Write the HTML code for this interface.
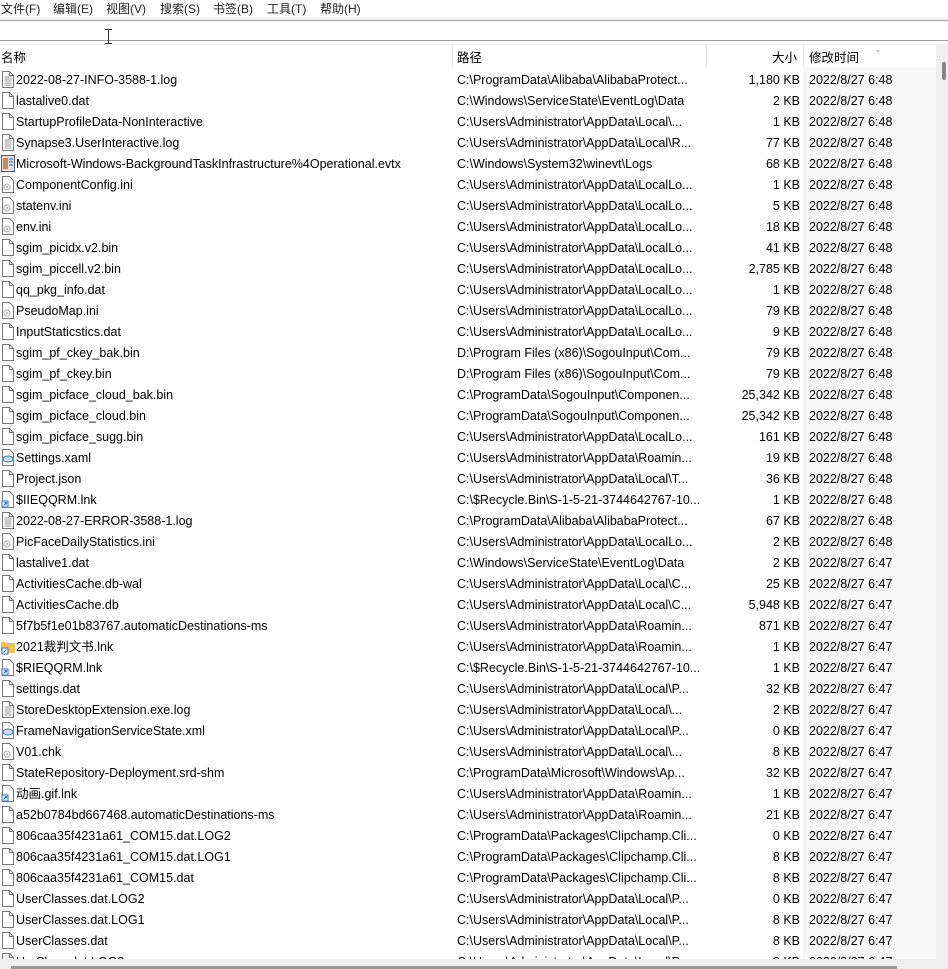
<!DOCTYPE html>
<html><head><meta charset="utf-8"><style>
*{margin:0;padding:0;box-sizing:border-box}
body{width:948px;height:969px;overflow:hidden;background:#fff;font-family:"Liberation Sans","Noto Sans CJK SC",sans-serif;font-size:12.5px;color:#000;position:relative}
.menu{position:absolute;top:0;left:0;height:17px;width:948px;background:#fff;color:#222;font-size:12px}
.menu span{position:absolute;top:2px;line-height:15px}
.line{position:absolute;left:0;width:948px;height:1px}
.hdr{position:absolute;top:45px;height:22px;width:948px}
.hdr span{position:absolute;top:6px;line-height:15px}
.sep{position:absolute;top:45px;width:1px;height:22px;background:#e5e5e5}
.datebg{position:absolute;left:803px;top:67px;width:133px;height:892px;background:#f7f7f7}
.r{position:absolute;left:0;height:21px;width:936px;white-space:nowrap}
.r svg{position:absolute;left:1px;top:2px}
.r span{line-height:15px}
.n{position:absolute;left:16px;top:4px}
.p{position:absolute;left:457px;top:4px}
.s{position:absolute;right:136px;top:4px}
.d{position:absolute;left:809px;top:4px}
</style></head><body>
<div class="menu"><span style="left:1px">文件(F)</span><span style="left:53px">编辑(E)</span><span style="left:106px">视图(V)</span><span style="left:160px">搜索(S)</span><span style="left:213px">书签(B)</span><span style="left:267px">工具(T)</span><span style="left:320px">帮助(H)</span></div>
<div class="line" style="top:17px;background:#f2f2f2;height:3px"></div>
<div class="line" style="top:20px;background:#a0a0a0"></div>
<div class="line" style="top:40px;background:#a0a0a0"></div>
<div style="position:absolute;left:108px;top:29px;width:1px;height:14px;background:#333"></div>
<div style="position:absolute;left:105px;top:29px;width:7px;height:1px;background:#333"></div>
<div style="position:absolute;left:105px;top:43px;width:7px;height:1px;background:#333"></div>
<div class="line" style="top:44px;background:#f0f0f0"></div>
<div class="hdr"><span style="left:1px">名称</span><span style="left:457px">路径</span><span style="left:772px">大小</span><span style="left:809px">修改时间</span><span style="left:874px;top:-3px;font-size:9px;color:#999">&#8964;</span></div>
<div class="sep" style="left:452px"></div><div class="sep" style="left:706px"></div><div class="sep" style="left:803px"></div>
<div class="datebg"></div>
<div style="position:absolute;left:936px;top:45px;width:12px;height:914px;background:#efefef"></div>
<div style="position:absolute;left:942px;top:62px;width:4px;height:18px;background:#888;border-radius:2px"></div>
<div style="position:absolute;left:0;top:959px;width:948px;height:10px;background:#efefef"></div>
<div style="position:absolute;left:11px;top:966px;width:886px;height:3px;background:#999"></div>
<svg width="0" height="0" style="position:absolute"><defs>
<symbol id="f" viewBox="0 0 14 17"><path d="M1.5 .5h7l4 4v12h-11z" fill="#fff" stroke="#777"/><path d="M8.5 .5v4h4" fill="none" stroke="#777"/></symbol>
<symbol id="t" viewBox="0 0 14 17"><path d="M1.5 .5h7l4 4v12h-11z" fill="#fff" stroke="#777"/><path d="M8.5 .5v4h4" fill="none" stroke="#777"/><path d="M3.5 6h7M3.5 8h7M3.5 10h7M3.5 12h7M3.5 14h7" stroke="#999"/></symbol>
<symbol id="i" viewBox="0 0 14 17"><path d="M1.5 .5h7l4 4v12h-11z" fill="#fff" stroke="#777"/><circle cx="6" cy="11" r="3" fill="none" stroke="#aaa"/><circle cx="6" cy="11" r="1" fill="#aaa"/></symbol>
<symbol id="l" viewBox="0 0 14 17"><path d="M1.5 .5h7l4 4v12h-11z" fill="#fff" stroke="#777"/><rect x="1" y="10" width="6" height="6" fill="#fff" stroke="#2b6cc4"/><path d="M2.5 14.5l3-3M3.5 11.5h2v2" stroke="#2b6cc4" fill="none"/></symbol>
<symbol id="e" viewBox="0 0 14 17"><rect x=".5" y=".5" width="13" height="16" fill="#dde" stroke="#557"/><rect x="2" y="3" width="5" height="11" fill="#c84"/><path d="M8 4h4M8 7h4M8 10h4" stroke="#36a"/></symbol>
<symbol id="x" viewBox="0 0 14 17"><path d="M1.5 .5h7l4 4v12h-11z" fill="#fff" stroke="#777"/><ellipse cx="7" cy="10" rx="5" ry="3" fill="#cde" stroke="#2a7ad0"/></symbol>
<symbol id="d" viewBox="0 0 14 17"><path d="M0 4h5l1 1h8v10H0z" fill="#f4c04e"/><rect x="1" y="10" width="6" height="6" fill="#fff" stroke="#2b6cc4"/><path d="M2.5 14.5l3-3" stroke="#2b6cc4"/></symbol>
</defs></svg>
<div id="rows">
<div class="r" style="top:69px"><svg width="14" height="17"><use href="#t"/></svg><span class="n">2022-08-27-INFO-3588-1.log</span><span class="p">C:\ProgramData\Alibaba\AlibabaProtect...</span><span class="s">1,180 KB</span><span class="d">2022/8/27 6:48</span></div>
<div class="r" style="top:90px"><svg width="14" height="17"><use href="#f"/></svg><span class="n">lastalive0.dat</span><span class="p">C:\Windows\ServiceState\EventLog\Data</span><span class="s">2 KB</span><span class="d">2022/8/27 6:48</span></div>
<div class="r" style="top:111px"><svg width="14" height="17"><use href="#f"/></svg><span class="n">StartupProfileData-NonInteractive</span><span class="p">C:\Users\Administrator\AppData\Local\...</span><span class="s">1 KB</span><span class="d">2022/8/27 6:48</span></div>
<div class="r" style="top:132px"><svg width="14" height="17"><use href="#t"/></svg><span class="n">Synapse3.UserInteractive.log</span><span class="p">C:\Users\Administrator\AppData\Local\R...</span><span class="s">77 KB</span><span class="d">2022/8/27 6:48</span></div>
<div class="r" style="top:153px"><svg width="14" height="17"><use href="#e"/></svg><span class="n">Microsoft-Windows-BackgroundTaskInfrastructure%4Operational.evtx</span><span class="p">C:\Windows\System32\winevt\Logs</span><span class="s">68 KB</span><span class="d">2022/8/27 6:48</span></div>
<div class="r" style="top:174px"><svg width="14" height="17"><use href="#i"/></svg><span class="n">ComponentConfig.ini</span><span class="p">C:\Users\Administrator\AppData\LocalLo...</span><span class="s">1 KB</span><span class="d">2022/8/27 6:48</span></div>
<div class="r" style="top:195px"><svg width="14" height="17"><use href="#i"/></svg><span class="n">statenv.ini</span><span class="p">C:\Users\Administrator\AppData\LocalLo...</span><span class="s">5 KB</span><span class="d">2022/8/27 6:48</span></div>
<div class="r" style="top:216px"><svg width="14" height="17"><use href="#i"/></svg><span class="n">env.ini</span><span class="p">C:\Users\Administrator\AppData\LocalLo...</span><span class="s">18 KB</span><span class="d">2022/8/27 6:48</span></div>
<div class="r" style="top:237px"><svg width="14" height="17"><use href="#f"/></svg><span class="n">sgim_picidx.v2.bin</span><span class="p">C:\Users\Administrator\AppData\LocalLo...</span><span class="s">41 KB</span><span class="d">2022/8/27 6:48</span></div>
<div class="r" style="top:258px"><svg width="14" height="17"><use href="#f"/></svg><span class="n">sgim_piccell.v2.bin</span><span class="p">C:\Users\Administrator\AppData\LocalLo...</span><span class="s">2,785 KB</span><span class="d">2022/8/27 6:48</span></div>
<div class="r" style="top:279px"><svg width="14" height="17"><use href="#f"/></svg><span class="n">qq_pkg_info.dat</span><span class="p">C:\Users\Administrator\AppData\LocalLo...</span><span class="s">1 KB</span><span class="d">2022/8/27 6:48</span></div>
<div class="r" style="top:300px"><svg width="14" height="17"><use href="#i"/></svg><span class="n">PseudoMap.ini</span><span class="p">C:\Users\Administrator\AppData\LocalLo...</span><span class="s">79 KB</span><span class="d">2022/8/27 6:48</span></div>
<div class="r" style="top:321px"><svg width="14" height="17"><use href="#f"/></svg><span class="n">InputStaticstics.dat</span><span class="p">C:\Users\Administrator\AppData\LocalLo...</span><span class="s">9 KB</span><span class="d">2022/8/27 6:48</span></div>
<div class="r" style="top:342px"><svg width="14" height="17"><use href="#f"/></svg><span class="n">sgim_pf_ckey_bak.bin</span><span class="p">D:\Program Files (x86)\SogouInput\Com...</span><span class="s">79 KB</span><span class="d">2022/8/27 6:48</span></div>
<div class="r" style="top:363px"><svg width="14" height="17"><use href="#f"/></svg><span class="n">sgim_pf_ckey.bin</span><span class="p">D:\Program Files (x86)\SogouInput\Com...</span><span class="s">79 KB</span><span class="d">2022/8/27 6:48</span></div>
<div class="r" style="top:384px"><svg width="14" height="17"><use href="#f"/></svg><span class="n">sgim_picface_cloud_bak.bin</span><span class="p">C:\ProgramData\SogouInput\Componen...</span><span class="s">25,342 KB</span><span class="d">2022/8/27 6:48</span></div>
<div class="r" style="top:405px"><svg width="14" height="17"><use href="#f"/></svg><span class="n">sgim_picface_cloud.bin</span><span class="p">C:\ProgramData\SogouInput\Componen...</span><span class="s">25,342 KB</span><span class="d">2022/8/27 6:48</span></div>
<div class="r" style="top:426px"><svg width="14" height="17"><use href="#f"/></svg><span class="n">sgim_picface_sugg.bin</span><span class="p">C:\Users\Administrator\AppData\LocalLo...</span><span class="s">161 KB</span><span class="d">2022/8/27 6:48</span></div>
<div class="r" style="top:447px"><svg width="14" height="17"><use href="#x"/></svg><span class="n">Settings.xaml</span><span class="p">C:\Users\Administrator\AppData\Roamin...</span><span class="s">19 KB</span><span class="d">2022/8/27 6:48</span></div>
<div class="r" style="top:468px"><svg width="14" height="17"><use href="#f"/></svg><span class="n">Project.json</span><span class="p">C:\Users\Administrator\AppData\Local\T...</span><span class="s">36 KB</span><span class="d">2022/8/27 6:48</span></div>
<div class="r" style="top:489px"><svg width="14" height="17"><use href="#l"/></svg><span class="n">$IIEQQRM.lnk</span><span class="p">C:\$Recycle.Bin\S-1-5-21-3744642767-10...</span><span class="s">1 KB</span><span class="d">2022/8/27 6:48</span></div>
<div class="r" style="top:510px"><svg width="14" height="17"><use href="#t"/></svg><span class="n">2022-08-27-ERROR-3588-1.log</span><span class="p">C:\ProgramData\Alibaba\AlibabaProtect...</span><span class="s">67 KB</span><span class="d">2022/8/27 6:48</span></div>
<div class="r" style="top:531px"><svg width="14" height="17"><use href="#i"/></svg><span class="n">PicFaceDailyStatistics.ini</span><span class="p">C:\Users\Administrator\AppData\LocalLo...</span><span class="s">2 KB</span><span class="d">2022/8/27 6:48</span></div>
<div class="r" style="top:552px"><svg width="14" height="17"><use href="#f"/></svg><span class="n">lastalive1.dat</span><span class="p">C:\Windows\ServiceState\EventLog\Data</span><span class="s">2 KB</span><span class="d">2022/8/27 6:47</span></div>
<div class="r" style="top:573px"><svg width="14" height="17"><use href="#f"/></svg><span class="n">ActivitiesCache.db-wal</span><span class="p">C:\Users\Administrator\AppData\Local\C...</span><span class="s">25 KB</span><span class="d">2022/8/27 6:47</span></div>
<div class="r" style="top:594px"><svg width="14" height="17"><use href="#f"/></svg><span class="n">ActivitiesCache.db</span><span class="p">C:\Users\Administrator\AppData\Local\C...</span><span class="s">5,948 KB</span><span class="d">2022/8/27 6:47</span></div>
<div class="r" style="top:615px"><svg width="14" height="17"><use href="#f"/></svg><span class="n">5f7b5f1e01b83767.automaticDestinations-ms</span><span class="p">C:\Users\Administrator\AppData\Roamin...</span><span class="s">871 KB</span><span class="d">2022/8/27 6:47</span></div>
<div class="r" style="top:636px"><svg width="14" height="17"><use href="#d"/></svg><span class="n">2021裁判文书.lnk</span><span class="p">C:\Users\Administrator\AppData\Roamin...</span><span class="s">1 KB</span><span class="d">2022/8/27 6:47</span></div>
<div class="r" style="top:657px"><svg width="14" height="17"><use href="#l"/></svg><span class="n">$RIEQQRM.lnk</span><span class="p">C:\$Recycle.Bin\S-1-5-21-3744642767-10...</span><span class="s">1 KB</span><span class="d">2022/8/27 6:47</span></div>
<div class="r" style="top:678px"><svg width="14" height="17"><use href="#f"/></svg><span class="n">settings.dat</span><span class="p">C:\Users\Administrator\AppData\Local\P...</span><span class="s">32 KB</span><span class="d">2022/8/27 6:47</span></div>
<div class="r" style="top:699px"><svg width="14" height="17"><use href="#t"/></svg><span class="n">StoreDesktopExtension.exe.log</span><span class="p">C:\Users\Administrator\AppData\Local\...</span><span class="s">2 KB</span><span class="d">2022/8/27 6:47</span></div>
<div class="r" style="top:720px"><svg width="14" height="17"><use href="#x"/></svg><span class="n">FrameNavigationServiceState.xml</span><span class="p">C:\Users\Administrator\AppData\Local\P...</span><span class="s">0 KB</span><span class="d">2022/8/27 6:47</span></div>
<div class="r" style="top:741px"><svg width="14" height="17"><use href="#i"/></svg><span class="n">V01.chk</span><span class="p">C:\Users\Administrator\AppData\Local\...</span><span class="s">8 KB</span><span class="d">2022/8/27 6:47</span></div>
<div class="r" style="top:762px"><svg width="14" height="17"><use href="#f"/></svg><span class="n">StateRepository-Deployment.srd-shm</span><span class="p">C:\ProgramData\Microsoft\Windows\Ap...</span><span class="s">32 KB</span><span class="d">2022/8/27 6:47</span></div>
<div class="r" style="top:783px"><svg width="14" height="17"><use href="#l"/></svg><span class="n">动画.gif.lnk</span><span class="p">C:\Users\Administrator\AppData\Roamin...</span><span class="s">1 KB</span><span class="d">2022/8/27 6:47</span></div>
<div class="r" style="top:804px"><svg width="14" height="17"><use href="#f"/></svg><span class="n">a52b0784bd667468.automaticDestinations-ms</span><span class="p">C:\Users\Administrator\AppData\Roamin...</span><span class="s">21 KB</span><span class="d">2022/8/27 6:47</span></div>
<div class="r" style="top:825px"><svg width="14" height="17"><use href="#f"/></svg><span class="n">806caa35f4231a61_COM15.dat.LOG2</span><span class="p">C:\ProgramData\Packages\Clipchamp.Cli...</span><span class="s">0 KB</span><span class="d">2022/8/27 6:47</span></div>
<div class="r" style="top:846px"><svg width="14" height="17"><use href="#f"/></svg><span class="n">806caa35f4231a61_COM15.dat.LOG1</span><span class="p">C:\ProgramData\Packages\Clipchamp.Cli...</span><span class="s">8 KB</span><span class="d">2022/8/27 6:47</span></div>
<div class="r" style="top:867px"><svg width="14" height="17"><use href="#f"/></svg><span class="n">806caa35f4231a61_COM15.dat</span><span class="p">C:\ProgramData\Packages\Clipchamp.Cli...</span><span class="s">8 KB</span><span class="d">2022/8/27 6:47</span></div>
<div class="r" style="top:888px"><svg width="14" height="17"><use href="#f"/></svg><span class="n">UserClasses.dat.LOG2</span><span class="p">C:\Users\Administrator\AppData\Local\P...</span><span class="s">0 KB</span><span class="d">2022/8/27 6:47</span></div>
<div class="r" style="top:909px"><svg width="14" height="17"><use href="#f"/></svg><span class="n">UserClasses.dat.LOG1</span><span class="p">C:\Users\Administrator\AppData\Local\P...</span><span class="s">8 KB</span><span class="d">2022/8/27 6:47</span></div>
<div class="r" style="top:930px"><svg width="14" height="17"><use href="#f"/></svg><span class="n">UserClasses.dat</span><span class="p">C:\Users\Administrator\AppData\Local\P...</span><span class="s">8 KB</span><span class="d">2022/8/27 6:47</span></div>
<div class="r" style="top:951px;height:8px;overflow:hidden"><svg width="14" height="17"><use href="#f"/></svg><span class="n">UsrClass.dat.LOG2</span><span class="p">C:\Users\Administrator\AppData\Local\P...</span><span class="s">8 KB</span><span class="d">2022/8/27 6:47</span></div>
</div>
</body></html>
